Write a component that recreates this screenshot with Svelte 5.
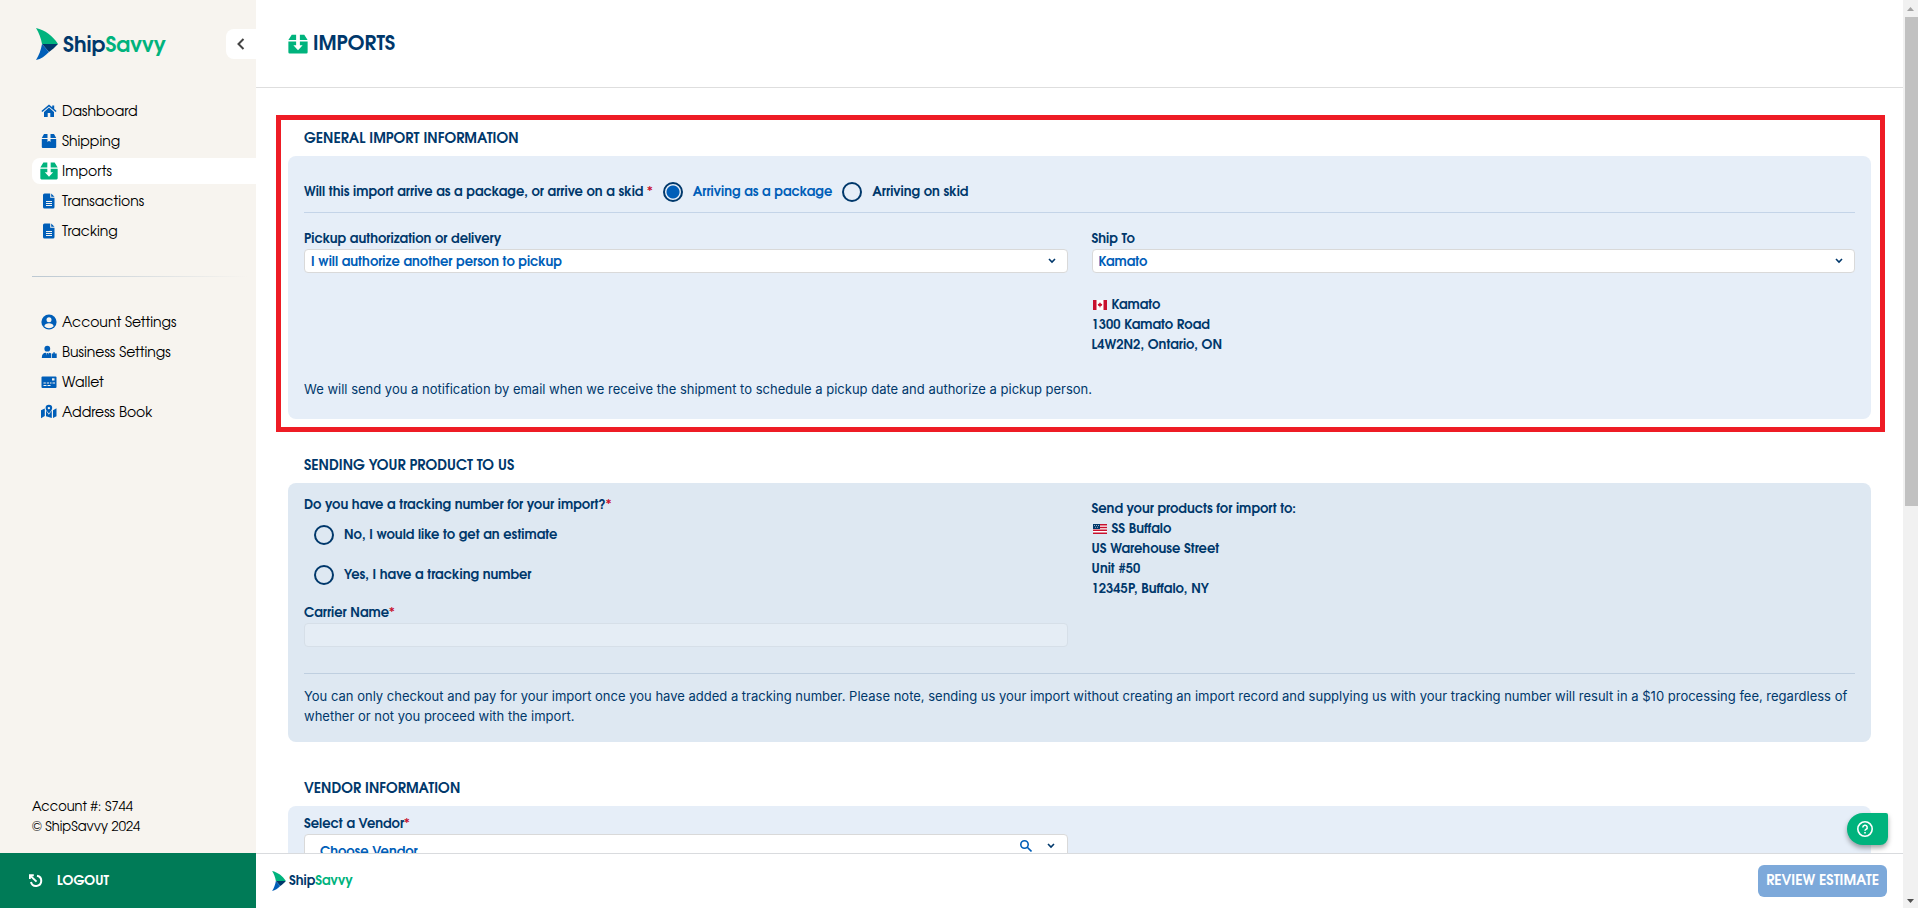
<script lang="ts">
  type NavItem = { label: string; icon: string; active?: boolean };

  const mainNav: NavItem[] = [
    { label: "Dashboard", icon: "home" },
    { label: "Shipping", icon: "box" },
    { label: "Imports", icon: "import", active: true },
    { label: "Transactions", icon: "file" },
    { label: "Tracking", icon: "file" },
  ];

  const settingsNav: NavItem[] = [
    { label: "Account Settings", icon: "user" },
    { label: "Business Settings", icon: "business" },
    { label: "Wallet", icon: "wallet" },
    { label: "Address Book", icon: "map" },
  ];

  let arrival = $state("package");
  let hasTracking = $state("");
  let pickup = $state("authorize");
  let shipTo = $state("kamato");
  let carrier = $state("");
  let vendor = $state("");
</script>

{#snippet logo()}
  <span class="logo">
    <svg viewBox="0 0 22 32" aria-hidden="true">
      <path d="M0 0c9 2 17 8 22 16H6C5 10 3 5 0 0z" fill="#00b37d" />
      <path d="M6 16h16c-3 3-6 6-9 8z" fill="#00386b" />
      <path d="M6 16l7 8c-4 4-8 7-13 8 3-5 5-10 6-16z" fill="#005eb8" />
    </svg>
    <span class="word">Ship<em>Savvy</em></span>
  </span>
{/snippet}

{#snippet icon(name: string)}
  <svg class="icon" class:large={name === "import"} viewBox="0 0 16 16" aria-hidden="true">
    {#if name === "home"}
      <path d="M8 1.500 .4 8l1 1.100L8 3.500l6.600 5.600 1-1.100-2.400-2V2.500h-2v1.800z" />
      <path d="M8 4.600 3 8.900V14h3.700v-4h2.600v4H13V8.900z" />
    {:else if name === "box"}
      <path d="M3 1h3.500v4H.8zM9.500 1H13l2.200 4H9.500zM.8 6h5.700v3L8 7.800 9.500 9V6h5.700v8a1 1 0 0 1-1 1H1.800a1 1 0 0 1-1-1z" />
    {:else if name === "import"}
      <path d="M3 .5h3.500v4.300H.3zM9.500 .5H13l2.700 4.300H9.500zM.3 6h6.200v3H4.300L8 13l3.700-4H9.500V6h6.200v8.500a1 1 0 0 1-1 1H1.300a1 1 0 0 1-1-1z" />
    {:else if name === "file"}
      <path d="M3.500 .5h5.700v4.300h4.300v9.200a1.500 1.500 0 0 1-1.500 1.500H3.500A1.500 1.500 0 0 1 2 14V2A1.500 1.500 0 0 1 3.500 .5zM10.200 .5l3.300 3.300h-3.300z" />
      <path d="M5 8.500h6M5 10.500h6M5 12.500h6" stroke="#f7f4ef" />
    {:else if name === "user"}
      <circle cx="8" cy="8" r="7.600" />
      <circle cx="8" cy="5.700" r="2.500" fill="#f7f4ef" />
      <path d="M3.300 12.300c.6-2.200 2.300-3 4.700-3s4.100.8 4.700 3a6.500 6.500 0 0 1-9.400 0z" fill="#f7f4ef" />
    {:else if name === "business"}
      <circle cx="6.300" cy="4.700" r="2.900" />
      <path d="M.8 14c0-3.600 1.600-5.200 4-5.200l1.500 3.700L7.800 8.800c1 0 1.800.3 2.400.8V14z" />
      <path d="M5.700 9h1.200l.5 4H5.200z" />
      <path d="M12.300 8.300h1.500V9.500h1.900V14h-4.800V9.500h1.400z" />
    {:else if name === "wallet"}
      <rect x=".5" y="2.500" width="15" height="11.500" rx="1" />
      <path d="M2.500 9h2.300M5.800 9h2.300M9 9h1.500M11.500 9H14M2.500 11.500h3M6.500 11.500h3" stroke="#f7f4ef" />
      <path d="M11 4.300h2.500v2.200H11z" fill="#f7f4ef" />
    {:else if name === "map"}
      <path d="M0 6.200 3.800 4.600V12L0 14.200zM5 6.500l2.800 4.300 3-4.300V14L5 12.300zM12 6.200l3.500-2v8L12 14z" />
      <path fill-rule="evenodd" d="M7.900 .8a3.300 3.300 0 0 1 3.300 3.300c0 1.700-1.600 3.500-3.300 5.500C6.200 7.600 4.600 5.800 4.600 4.100A3.300 3.300 0 0 1 7.900 .8zm0 2.100a1.200 1.200 0 1 0 0 2.400 1.200 1.200 0 0 0 0-2.400z" />
    {/if}
  </svg>
{/snippet}

{#snippet chevron()}
  <svg class="chevron" viewBox="0 0 8 6" aria-hidden="true"><path d="M1 1l3 3 3-3" /></svg>
{/snippet}

{#snippet nav(items: NavItem[], label: string)}
  <nav aria-label={label}>
    {#each items as item}
      <a href="#{item.label.toLowerCase().replace(' ', '-')}" class:active={item.active}>
        <span class="icon-slot">{@render icon(item.icon)}</span>
        <span class="nav-label">{item.label}</span>
      </a>
    {/each}
  </nav>
{/snippet}

<div class="app">
  <aside class="sidebar">
    <div class="brand">
      {@render logo()}
      <button type="button" class="collapse" aria-label="Collapse menu">
        <svg viewBox="0 0 8 12" aria-hidden="true"><path d="M6.500 1 1.500 6l5 5" /></svg>
      </button>
    </div>
    {@render nav(mainNav, "Main")}
    <hr />
    {@render nav(settingsNav, "Settings")}
    <div class="account">
      <p>Account #: S744</p>
      <p>© ShipSavvy 2024</p>
    </div>
    <button type="button" class="logout">
      <svg viewBox="0 0 14 14" aria-hidden="true">
        <path d="M.8 5V1.200h4M1.200 1.600l6.300 6" />
        <path d="M8 1.700a5.200 5.200 0 1 1-6 6.300" />
      </svg>
      LOGOUT
    </button>
  </aside>

  <main>
    <header class="topbar">
      {@render icon("import")}
      <h1>IMPORTS</h1>
    </header>

    <div class="content">
      <section class="highlight">
        <h2>GENERAL IMPORT INFORMATION</h2>
        <div class="panel general">
          <div class="question" role="radiogroup" aria-labelledby="arrival-label">
            <span id="arrival-label">Will this import arrive as a package, or arrive on a skid <i>*</i></span>
            <label class="radio">
              <input type="radio" name="arrival" value="package" bind:group={arrival} />
              <span>Arriving as a package</span>
            </label>
            <label class="radio">
              <input type="radio" name="arrival" value="skid" bind:group={arrival} />
              <span>Arriving on skid</span>
            </label>
          </div>
          <div class="columns">
            <div>
              <label for="pickup">Pickup authorization or delivery</label>
              <div class="select">
                <select id="pickup" bind:value={pickup}>
                  <option value="authorize">I will authorize another person to pickup</option>
                </select>
                {@render chevron()}
              </div>
            </div>
            <div>
              <label for="ship-to">Ship To</label>
              <div class="select">
                <select id="ship-to" bind:value={shipTo}>
                  <option value="kamato">Kamato</option>
                </select>
                {@render chevron()}
              </div>
              <address>
                <span class="place">
                  <svg class="flag" viewBox="0 0 14 10" aria-hidden="true">
                    <path d="M0 0h14v10H0z" fill="#fff" />
                    <path d="M0 0h3.500v10H0zM10.500 0H14v10h-3.500zM7 2.200l.8 1.400 1.500.6-.6 1.600-1.400.6v1.200h-.6V6.400l-1.400-.6-.6-1.600 1.500-.6z" fill="#c8102e" />
                  </svg>
                  Kamato
                </span>
                <span>1300 Kamato Road</span>
                <span>L4W2N2, Ontario, ON</span>
              </address>
            </div>
          </div>
          <p class="note">
            We will send you a notification by email when we receive the shipment to schedule a pickup date and authorize a pickup person.
          </p>
        </div>
      </section>

      <section>
        <h2>SENDING YOUR PRODUCT TO US</h2>
        <div class="panel sending">
          <div class="columns">
            <div>
              <div role="radiogroup" aria-labelledby="tracking-label">
                <span id="tracking-label">Do you have a tracking number for your import?<i>*</i></span>
                <label class="radio stacked">
                  <input type="radio" name="tracking" value="no" bind:group={hasTracking} />
                  <span>No, I would like to get an estimate</span>
                </label>
                <label class="radio stacked">
                  <input type="radio" name="tracking" value="yes" bind:group={hasTracking} />
                  <span>Yes, I have a tracking number</span>
                </label>
              </div>
              <label class="carrier" for="carrier">Carrier Name<i>*</i></label>
              <input id="carrier" type="text" disabled bind:value={carrier} />
            </div>
            <address>
              <span>Send your products for import to:</span>
              <span class="place">
                <svg class="flag" viewBox="0 0 14 10" aria-hidden="true">
                  <path d="M0 0h14v10H0z" fill="#fff" />
                  <path d="M0 .7h14M0 3.500h14M0 6.300h14M0 9.200h14" stroke="#c8102e" stroke-width="1.400" />
                  <path d="M0 0h7v5H0z" fill="#00386b" />
                  <path d="M1 1.500h1M3 1.500h1M5 1.500h1M2 3.300h1M4 3.300h1" stroke="#fff" stroke-width=".6" />
                </svg>
                SS Buffalo
              </span>
              <span>US Warehouse Street</span>
              <span>Unit #50</span>
              <span>12345P, Buffalo, NY</span>
            </address>
          </div>
          <p class="note">
            You can only checkout and pay for your import once you have added a tracking number. Please note, sending us your import without creating an import record and supplying us with your tracking number will result in a $10 processing fee, regardless of whether or not you proceed with the import.
          </p>
        </div>
      </section>

      <section>
        <h2>VENDOR INFORMATION</h2>
        <div class="panel vendor">
          <div class="columns">
            <div>
              <label for="vendor">Select a Vendor<i>*</i></label>
              <div class="combo">
                <input id="vendor" type="text" placeholder="Choose Vendor" bind:value={vendor} />
                <svg class="search" viewBox="0 0 12 12" aria-hidden="true">
                  <circle cx="4.500" cy="4.500" r="3.700" />
                  <path d="M7 7l4.500 4.500" />
                </svg>
                {@render chevron()}
              </div>
            </div>
          </div>
        </div>
      </section>
    </div>

    <footer>
      <div class="small-logo">{@render logo()}</div>
      <button type="button" class="review">REVIEW ESTIMATE</button>
      <button type="button" class="help" aria-label="Help">
        <svg viewBox="0 0 16 16" aria-hidden="true">
          <circle cx="8" cy="8" r="7.200" />
          <path d="M5.800 6.400a2.200 2.200 0 1 1 3.200 2c-.7.400-1 .7-1 1.400M8 11v1.500" />
        </svg>
      </button>
    </footer>
  </main>

  <div class="scrollbar" aria-hidden="true">
    <svg viewBox="0 0 7 4"><path d="M0 4h7L3.500 0z" fill="#a3a3a3" /></svg>
    <div class="track"><div class="thumb"></div></div>
    <svg viewBox="0 0 7 4"><path d="M0 0h7L3.500 4z" fill="#505050" /></svg>
  </div>
</div>

<style>
  :global(body) {
    margin: 0;
  }

  .app {
    --navy: #00386b;
    --blue: #005eb8;
    --green: #00b37d;
    display: flex;
    height: 100vh;
    overflow: hidden;
    background: #fff;
    color: var(--navy);
    font: 400 13px/20px "TeX Gyre Adventor", Inter, sans-serif;
  }

  .app * {
    box-sizing: border-box;
  }

  button,
  input,
  select {
    margin: 0;
    font: inherit;
    color: inherit;
  }

  button {
    border: 0;
    padding: 0;
    cursor: pointer;
  }

  h1,
  h2,
  p {
    margin: 0;
  }

  svg {
    display: block;
    flex: none;
  }

  .sidebar {
    flex: none;
    display: flex;
    flex-direction: column;
    width: 256px;
    background: #f7f4ef;
    color: #000;
  }

  .brand {
    display: flex;
    align-items: center;
    justify-content: space-between;
    height: 88px;
    margin-bottom: 10px;
    padding-left: 36px;
  }

  .logo {
    display: flex;
    align-items: center;
    gap: 5px;
    color: var(--navy);
    font-size: 21px;
    font-weight: 600;
    line-height: 32px;
  }

  .logo svg {
    width: 22px;
    height: 32px;
  }

  .logo em {
    color: var(--green);
    font-style: normal;
  }

  .word,
  .nav-label,
  h1 {
    padding-top: 3px;
  }

  .collapse {
    display: grid;
    place-items: center;
    width: 30px;
    height: 30px;
    border-radius: 8px 0 0 8px;
    background: #fff;
  }

  .collapse svg {
    width: 8px;
    height: 12px;
    fill: none;
    stroke: #444;
    stroke-width: 2;
  }

  nav {
    display: grid;
    gap: 4px;
    padding-left: 32px;
    font-size: 14px;
  }

  nav a {
    display: flex;
    align-items: center;
    gap: 4px;
    height: 26px;
    padding-left: 8px;
    border-radius: 8px 0 0 8px;
    color: inherit;
    text-decoration: none;
  }

  nav a.active {
    background: #fff;
  }

  .icon-slot {
    display: grid;
    justify-items: center;
    width: 18px;
  }

  .icon {
    width: 16px;
    height: 16px;
    fill: var(--blue);
  }

  .icon.large {
    width: 18px;
    height: 18px;
    fill: var(--green);
  }

  .sidebar hr {
    width: 216px;
    height: 1px;
    margin: 32px 0 32px 32px;
    border: 0;
    background: linear-gradient(90deg, #bcc8d2, #f7f4ef);
  }

  .account {
    margin-top: auto;
    padding: 0 32px 16px;
  }

  .logout {
    display: flex;
    align-items: center;
    gap: 14px;
    height: 55px;
    padding-left: 29px;
    background: #007b57;
    color: #fff;
    font-weight: 600;
  }

  .logout svg {
    width: 14px;
    height: 14px;
    fill: none;
    stroke: #fff;
    stroke-width: 2;
  }

  main {
    flex: 1;
    min-width: 0;
    display: flex;
    flex-direction: column;
  }

  .topbar {
    flex: none;
    display: flex;
    align-items: center;
    gap: 5px;
    height: 88px;
    padding-left: 32px;
    border-bottom: 1px solid #dedede;
  }

  .topbar .icon {
    width: 20px;
    height: 20px;
  }

  h1 {
    font-size: 20px;
    font-weight: 600;
    line-height: 24px;
  }

  .content {
    flex: 1;
    min-height: 0;
    display: flex;
    flex-direction: column;
    gap: 28px;
    padding: 27px 32px 0;
    overflow: hidden;
  }

  section {
    flex: none;
  }

  .highlight {
    margin: 0 -14px -13px -12px;
    padding: 0 9px 8px 7px;
    border: 5px solid #ee1c25;
  }

  h2 {
    padding: 4px 0 0 16px;
    font-size: 14px;
    font-weight: 600;
    line-height: 32px;
  }

  .panel {
    padding: 0 16px;
    border-radius: 8px;
    background: #e6eef8;
    font-weight: 600;
  }

  .general {
    padding-top: 16px;
    padding-bottom: 20px;
  }

  .sending {
    padding-top: 12px;
    padding-bottom: 16px;
    background: #dee8f2;
  }

  .vendor {
    padding-top: 8px;
    padding-bottom: 20px;
  }

  i {
    color: #c8102e;
    font-style: normal;
    font-weight: 400;
  }

  .question {
    display: flex;
    align-items: center;
    gap: 10px;
    height: 41px;
    margin-bottom: 16px;
    border-bottom: 1px solid #c4d4e8;
  }

  .radio {
    display: flex;
    align-items: center;
    gap: 10px;
  }

  .radio.stacked {
    height: 40px;
    padding-left: 10px;
  }

  input[type="radio"] {
    appearance: none;
    width: 20px;
    height: 20px;
    border: 2px solid var(--navy);
    border-radius: 50%;
  }

  input[type="radio"]:checked {
    background: radial-gradient(circle, var(--blue) 6px, transparent 7px);
  }

  input[type="radio"]:checked + span {
    color: var(--blue);
  }

  .columns {
    display: grid;
    grid-template-columns: 1fr 1fr;
    gap: 24px;
  }

  .columns label {
    display: block;
  }

  .columns .radio {
    display: flex;
  }

  .select {
    display: grid;
    align-items: center;
  }

  .select > :global(*) {
    grid-area: 1 / 1;
  }

  select,
  #carrier {
    appearance: none;
    display: block;
    width: 100%;
    height: 24px;
    padding: 2px 6px 0;
    border: 1px solid #d9d9d9;
    border-radius: 4px;
    background: #fff;
    color: var(--blue);
  }

  #carrier {
    border-color: #d6dfe8;
    background: #e5edf5;
  }

  .chevron {
    width: 8px;
    height: 6px;
    fill: none;
    stroke: var(--navy);
    stroke-width: 1.6;
  }

  .select .chevron {
    justify-self: end;
    margin-right: 12px;
    pointer-events: none;
  }

  address {
    display: grid;
    align-content: start;
    font-style: normal;
  }

  .general address {
    margin-top: 22px;
  }

  .sending address {
    padding-top: 4px;
  }

  .place {
    display: flex;
    align-items: center;
    gap: 5px;
    padding-left: 1px;
  }

  .flag {
    width: 14px;
    height: 10px;
  }

  .note {
    font-family: Inter, sans-serif;
    font-weight: 400;
  }

  .general .note {
    margin-top: 24px;
  }

  .carrier {
    margin-top: 8px;
  }

  .sending .note {
    margin-top: 26px;
    padding-top: 12px;
    border-top: 1px solid #bfcfe0;
  }

  .combo {
    display: flex;
    gap: 15px;
    padding-right: 12px;
    border: 1px solid #d9d9d9;
    border-radius: 4px;
    background: #fff;
  }

  .combo input {
    flex: 1;
    height: 34px;
    padding: 0 15px;
    border: 0;
    background: none;
    color: var(--blue);
  }

  .combo input::placeholder {
    color: var(--blue);
    opacity: 1;
  }

  .search {
    width: 12px;
    height: 12px;
    margin-top: 5px;
    fill: none;
    stroke: var(--blue);
    stroke-width: 1.6;
  }

  .combo .chevron {
    margin-top: 8px;
  }

  footer {
    position: relative;
    flex: none;
    display: flex;
    align-items: center;
    justify-content: space-between;
    height: 55px;
    padding: 0 16px;
    border-top: 1px solid #d9dbde;
    background: #fff;
  }

  .small-logo .logo {
    gap: 3px;
    font-size: 13px;
    line-height: 20px;
  }

  .small-logo .logo svg {
    width: 14px;
    height: 20px;
  }

  .small-logo .word {
    padding-top: 0;
  }

  .review {
    height: 32px;
    padding: 2px 8px 0;
    border-radius: 6px;
    background: #7da9da;
    color: #fff;
    font-size: 14px;
    font-weight: 700;
  }

  .help {
    position: absolute;
    right: 15px;
    bottom: 63px;
    display: grid;
    justify-items: start;
    align-items: center;
    width: 41px;
    height: 32px;
    padding-left: 10px;
    border-radius: 16px 2px 8px 16px;
    background: var(--green);
    box-shadow: 0 3px 5px rgba(0, 0, 0, 0.35);
  }

  .help svg {
    width: 16px;
    height: 16px;
    fill: none;
    stroke: #fff;
    stroke-width: 1.6;
  }

  .scrollbar {
    flex: none;
    display: flex;
    flex-direction: column;
    align-items: center;
    width: 15px;
    padding: 7px 0 5px;
    background: #f1f1f1;
  }

  .scrollbar svg {
    width: 7px;
    height: 4px;
  }

  .track {
    flex: 1;
    width: 100%;
    padding: 6px 0 8px 2px;
  }

  .thumb {
    height: 56%;
    background: #c1c1c1;
  }
</style>
